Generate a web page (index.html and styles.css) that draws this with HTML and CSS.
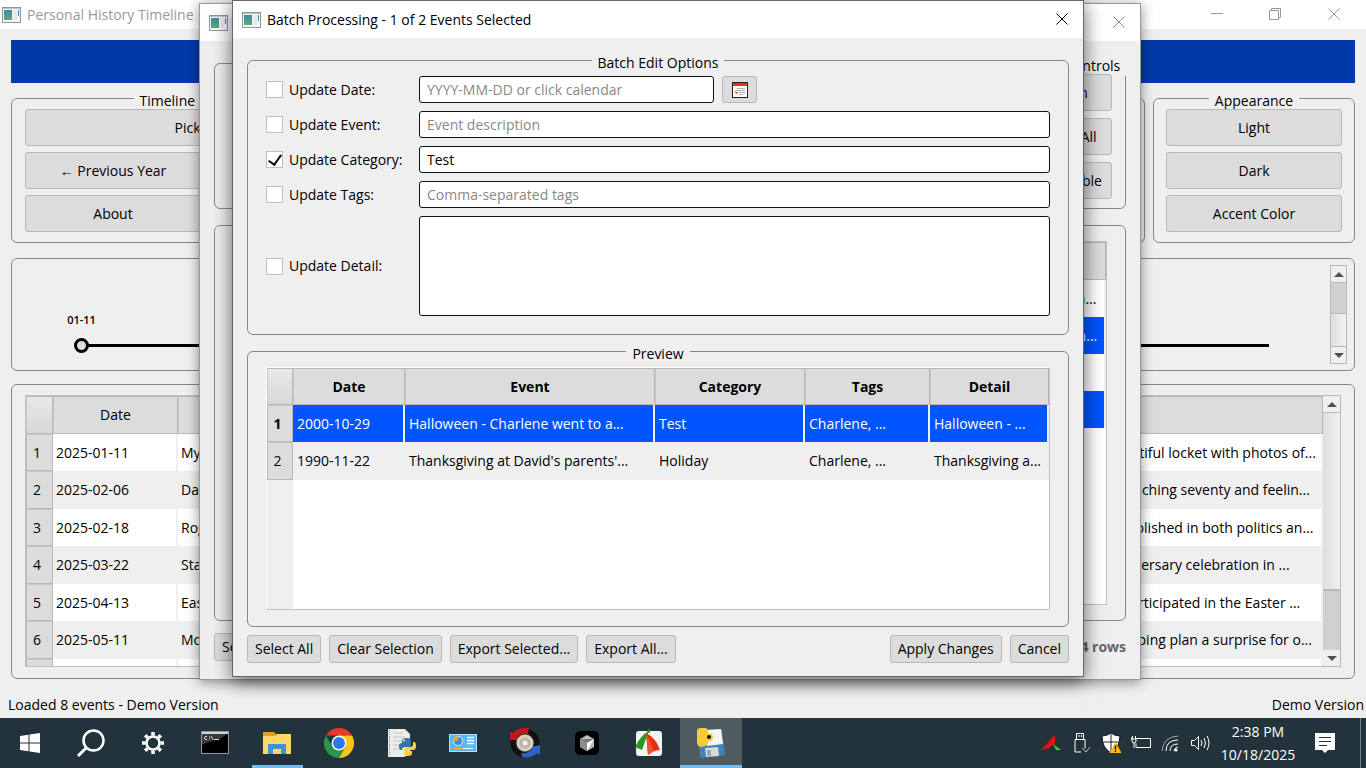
FILE: index.html
```html
<!DOCTYPE html>
<html lang="en">
<head>
    <meta charset="UTF-8">
    <meta name="viewport" content="width=device-width, initial-scale=1.0">
    <title>Personal History Timeline</title>
    <link rel="stylesheet" href="styles.css">
</head>
<body>
    <svg class="defs" aria-hidden="true">
        <defs>
            <linearGradient id="appFill" x1="0" y1="0" x2="0" y2="1">
                <stop offset="0" stop-color="#3f86a8"/>
                <stop offset="1" stop-color="#5cab6c"/>
            </linearGradient>
            <symbol id="appIcon" viewBox="0 0 19 16">
                <rect x="0.5" y="0.5" width="18" height="15" fill="#f4f6f7" stroke="#8d979d"/>
                <path d="M1 1.5h17" stroke="#b9c3c9"/>
                <rect x="2" y="3" width="8" height="10" fill="url(#appFill)"/>
                <rect x="11" y="3" width="4" height="10" fill="#e6e8ea"/>
                <rect x="16" y="3" width="1" height="6" fill="#3f86a8"/>
            </symbol>
            <symbol id="closeIcon" viewBox="0 0 12 12">
                <path d="M0.5 0.5l11 11M11.5 0.5l-11 11" stroke="currentColor" fill="none"/>
            </symbol>
        </defs>
    </svg>

    <div class="desktop">
        <!-- Main window -->
        <main class="window main-window">
            <header class="titlebar">
                <svg class="app-icon"><use href="#appIcon"/></svg>
                <span class="title">Personal History Timeline</span>
                <div class="caption">
                    <button aria-label="Minimize"><svg viewBox="0 0 12 12"><path d="M0 5.5h12" stroke="currentColor"/></svg></button>
                    <button aria-label="Restore"><svg viewBox="0 0 12 12"><path d="M0.5 2.5h9v9h-9zM2.5 2.5v-2h9v9h-2" stroke="currentColor" fill="none"/></svg></button>
                    <button aria-label="Close"><svg><use href="#closeIcon"/></svg></button>
                </div>
            </header>
            <div class="main-body">
                <div class="banner"></div>
                <div class="control-row">
                    <fieldset class="group nav-group">
                        <legend>Timeline Navigation</legend>
                        <button class="btn wide">Pick Year</button>
                        <button class="btn">← Previous Year</button>
                        <button class="btn">Next Year →</button>
                        <button class="btn">About</button>
                        <button class="btn">Help</button>
                    </fieldset>
                    <div class="group actions-group"></div>
                    <fieldset class="group look-group">
                        <legend>Appearance</legend>
                        <button class="btn">Light</button>
                        <button class="btn">Dark</button>
                        <button class="btn">Accent Color</button>
                    </fieldset>
                </div>
                <div class="group timeline">
                    <div class="track">
                        <div class="node"><span>01-11</span></div>
                    </div>
                    <div class="scrollbar">
                        <button class="up" aria-label="Scroll up"></button>
                        <div class="thumb timeline-thumb"></div>
                        <div class="trough"></div>
                        <button class="down" aria-label="Scroll down"></button>
                    </div>
                </div>
                <div class="group events">
                    <div class="table-box events-box">
                        <table>
                            <colgroup><col class="c-num"><col class="c-date"><col><col class="c-detail"></colgroup>
                            <thead><tr><th></th><th>Date</th><th>Event</th><th></th></tr></thead>
                            <tbody>
                                <tr><th>1</th><td>2025-01-11</td><td>My birthday</td><td>A beautiful locket with photos of...</td></tr>
                                <tr><th>2</th><td>2025-02-06</td><td>Dad's birthday</td><td>Approaching seventy and feelin...</td></tr>
                                <tr><th>3</th><td>2025-02-18</td><td>Roger's birthday</td><td>Is established in both politics an...</td></tr>
                                <tr><th>4</th><td>2025-03-22</td><td>Start of spring</td><td>– Anniversary celebration in ...</td></tr>
                                <tr><th>5</th><td>2025-04-13</td><td>Easter</td><td>She participated in the Easter ...</td></tr>
                                <tr><th>6</th><td>2025-05-11</td><td>Mother's Day</td><td>I'm helping plan a surprise for o...</td></tr>
                                <tr><th></th><td></td><td></td><td></td></tr>
                            </tbody>
                        </table>
                    </div>
                    <div class="scrollbar events-scroll">
                        <button class="up" aria-label="Scroll up"></button>
                        <div class="trough"></div>
                        <div class="thumb events-thumb"></div>
                        <button class="down" aria-label="Scroll down"></button>
                    </div>
                </div>
            </div>
            <footer class="statusbar">
                <span>Loaded 8 events - Demo Version</span>
                <span>Demo Version</span>
            </footer>
        </main>

        <!-- Search window -->
        <section class="window search-window">
            <header class="titlebar">
                <svg class="app-icon"><use href="#appIcon"/></svg>
                <div class="caption">
                    <button aria-label="Close"><svg><use href="#closeIcon"/></svg></button>
                </div>
            </header>
            <div class="search-body">
                <div class="search-top">
                    <div class="group search-left"></div>
                    <fieldset class="group view-group">
                        <legend>Table Controls</legend>
                        <button class="btn">Open</button>
                        <button class="btn">Clear All</button>
                        <button class="btn">Use Table</button>
                    </fieldset>
                </div>
                <div class="group results">
                    <div class="table-box">
                        <table>
                            <colgroup><col><col class="c-more"></colgroup>
                            <thead><tr><th></th><th></th></tr></thead>
                            <tbody>
                                <tr><td></td><td>Easter lunch...</td></tr>
                                <tr class="selected"><td></td><td>A Halloween...</td></tr>
                                <tr><td></td><td></td></tr>
                                <tr class="selected"><td></td><td></td></tr>
                            </tbody>
                        </table>
                    </div>
                </div>
                <div class="button-row">
                    <button class="btn small">Select All</button>
                    <span class="count">4 rows</span>
                </div>
            </div>
        </section>

        <!-- Batch dialog -->
        <section class="window batch-window" role="dialog" aria-label="Batch Processing">
            <header class="titlebar">
                <svg class="app-icon"><use href="#appIcon"/></svg>
                <span class="title">Batch Processing - 1 of 2 Events Selected</span>
                <div class="caption">
                    <button aria-label="Close"><svg><use href="#closeIcon"/></svg></button>
                </div>
            </header>
            <form class="batch-body">
                <fieldset class="group edit-group">
                    <legend>Batch Edit Options</legend>
                    <label class="check"><input type="checkbox"> Update Date:</label>
                    <div class="date-row">
                        <input class="field" type="text" placeholder="YYYY-MM-DD or click calendar" aria-label="Date">
                        <button class="btn small cal" type="button" aria-label="Open calendar">
                            <svg viewBox="0 0 16 16">
                                <rect x="0.5" y="0.5" width="15" height="15" fill="#fff" stroke="#222"/>
                                <path d="M1 1h14v3H1z" fill="#e63312"/>
                                <path d="M5 6.500h8M3 8.500h10M7 10.500h6M7 12.500h4" stroke="#b4b4b4"/>
                                <path d="M3 10h3v1H5v1H4v-1H3z" fill="#e8553c"/>
                            </svg>
                        </button>
                    </div>
                    <label class="check"><input type="checkbox"> Update Event:</label>
                    <input class="field" type="text" placeholder="Event description" aria-label="Event">
                    <label class="check"><input type="checkbox" checked> Update Category:</label>
                    <input class="field" type="text" value="Test" aria-label="Category">
                    <label class="check"><input type="checkbox"> Update Tags:</label>
                    <input class="field" type="text" placeholder="Comma-separated tags" aria-label="Tags">
                    <label class="check"><input type="checkbox"> Update Detail:</label>
                    <textarea class="field" aria-label="Detail"></textarea>
                </fieldset>
                <fieldset class="group preview-group">
                    <legend>Preview</legend>
                    <div class="table-box preview-box">
                        <table>
                            <colgroup><col class="p-num"><col class="p-date"><col class="p-event"><col class="p-cat"><col class="p-tags"><col></colgroup>
                            <thead><tr><th></th><th>Date</th><th>Event</th><th>Category</th><th>Tags</th><th>Detail</th></tr></thead>
                            <tbody>
                                <tr class="selected"><th>1</th><td>2000-10-29</td><td>Halloween - Charlene went to a...</td><td>Test</td><td>Charlene, ...</td><td>Halloween - ...</td></tr>
                                <tr><th>2</th><td>1990-11-22</td><td>Thanksgiving at David's parents'...</td><td>Holiday</td><td>Charlene, ...</td><td>Thanksgiving a...</td></tr>
                            </tbody>
                        </table>
                    </div>
                </fieldset>
                <div class="button-row">
                    <button class="btn small" type="button">Select All</button>
                    <button class="btn small" type="button">Clear Selection</button>
                    <button class="btn small" type="button">Export Selected...</button>
                    <button class="btn small" type="button">Export All...</button>
                    <button class="btn small push" type="button">Apply Changes</button>
                    <button class="btn small" type="button">Cancel</button>
                </div>
            </form>
        </section>
    </div>

    <nav class="taskbar">
        <button class="task start" aria-label="Start">
            <svg width="20" height="20" viewBox="0 0 20 20"><path d="M0 3l8.500-1.300v7.800H0zM9.500 1.500L20 0v9.500H9.500zM0 10.500h8.500v7.800L0 17zM9.500 10.500H20V20L9.500 18.500z" fill="#fff"/></svg>
        </button>
        <button class="task" aria-label="Search">
            <svg width="30" height="30" viewBox="0 0 30 30"><circle cx="17.500" cy="12.500" r="10" fill="none" stroke="#fff" stroke-width="2.500"/><path d="M10.500 19.500L2 28" stroke="#fff" stroke-width="3"/></svg>
        </button>
        <button class="task" aria-label="Settings">
            <svg width="24" height="24" viewBox="-12 -12 24 24"><circle r="6.500" fill="none" stroke="#fff" stroke-width="2.500"/><path d="M0-7.500V-11M0 7.500V11M-7.500 0H-11M7.500 0H11M5.300-5.300l2.500-2.500M-5.300-5.300l-2.500-2.500M5.300 5.300l2.500 2.500M-5.300 5.300l-2.500 2.500" stroke="#fff" stroke-width="3.500"/></svg>
        </button>
        <button class="task" aria-label="Command Prompt">
            <svg width="28" height="24" viewBox="0 0 28 24"><rect x="0.500" y="0.500" width="27" height="22" fill="#000" stroke="#8f979a"/><path d="M1 1h26v2H1z" fill="#cdd3d6"/><path d="M1 3h24C20 10 9 9 1 14z" fill="#3a3a3a"/><path d="M4 5.500h2M4 8.500h2M3.500 6v2M8 6h1M8 8h1M10 5l2 3.500M13 8.500h5" stroke="#ddd" fill="none"/></svg>
        </button>
        <button class="task running" aria-label="File Explorer">
            <svg width="28" height="24" viewBox="0 0 28 24"><path d="M0 1h11l2 2v3H0z" fill="#e0a11b"/><path d="M0 5h12l2-2h14v20H0z" fill="#ffd766"/><path d="M5 23V13h18v10h-5v-5h-8v5z" fill="#3c93dc"/></svg>
        </button>
        <button class="task" aria-label="Chrome">
            <svg width="30" height="30" viewBox="-15 -15 30 30"><path d="M-13-7.500A15 15 0 0 1 13-7.500H0z" fill="#e23b2e"/><path d="M-13-7.500A15 15 0 0 0 0 15L6.500 3.750-6.500 3.750z" fill="#279847"/><path d="M13-7.500A15 15 0 0 1 0 15L6.500 3.750 0-7.500z" fill="#fcc419"/><circle r="7.500" fill="#fff"/><circle r="6" fill="#2a78ec"/></svg>
        </button>
        <button class="task" aria-label="Python editor">
            <svg width="30" height="30" viewBox="0 0 30 30"><path d="M2 1h17l5 5v20l-6 3H2z" fill="#ececea"/><path d="M3.500 2v26" stroke="#8b8b8b" stroke-dasharray="1 1"/><path d="M7 5h9M7 9h12M7 13h10M7 17h8M7 21h7" stroke="#c4c4c4"/><path d="M16 15v-2q0-3 4.500-3t4.500 3v4q0 2-2 2h-4q-3 0-3 3h-1q-2 0-2-4 0-3 3-3h6" fill="#3572a5"/><path d="M27 14h1q2 0 2 4 0 4-3 4h-5v1h4v2q0 3-4.500 3T18 25v-3q0-3 3-3h3q3 0 3-3z" fill="#ffd245"/><circle cx="18" cy="12.500" r="1" fill="#fff"/></svg>
        </button>
        <button class="task" aria-label="Control Panel">
            <svg width="28" height="20" viewBox="0 0 28 20"><rect x="0.500" y="1.500" width="27" height="17" fill="#56b9f2" stroke="#b5e1fa"/><circle cx="9" cy="8" r="5" fill="#d8f0fd"/><path d="M9 8V4a4 4 0 1 1-4 4z" fill="#3a8fd0"/><path d="M9 8H4a5 5 0 0 1 5-5z" fill="#f7a727"/><path d="M18 4.500h7M18 7.500h7M18 10.500h7" stroke="#fff" stroke-width="1.500"/><path d="M4 15.500h10" stroke="#f7a727" stroke-width="2"/><path d="M14 15.500h10" stroke="#fff"/></svg>
        </button>
        <button class="task" aria-label="Tire sync">
            <svg width="30" height="30" viewBox="-15 -15 30 30"><circle r="12" fill="none" stroke="#111" stroke-width="5"/><path d="M-15-11l3 1Q-7-16 4-15L3-9Q-4-10-7-6l2 3h-10z" fill="#c4161c"/><path d="M15 2v10l-3-2Q6 16-3 14l-1-4Q3 11 7 6L5 4z" fill="#2c62c9"/><circle r="8.500" fill="#d8cfc0"/><circle r="5.500" fill="#bdb3a4"/><circle r="2.500" fill="#eee"/></svg>
        </button>
        <button class="task" aria-label="Cursor">
            <svg width="24" height="24" viewBox="0 0 24 24"><rect width="24" height="24" rx="5" fill="#000"/><path d="M12 4l7 4v8l-7 4-7-4V8z" fill="#bdbdbd"/><path d="M5 8h14l-7 4z" fill="#777"/><path d="M19 8l-7 12v-8z" fill="#fff"/><path d="M5 8l7 4v8l-7-4z" fill="#8d8d8d"/></svg>
        </button>
        <button class="task" aria-label="Screen capture">
            <svg width="30" height="30" viewBox="0 0 30 30"><rect x="2" y="3" width="26" height="25" rx="3" fill="#f3f3f3"/><path d="M15 3Q7 7 1 19l7 3Q11 12 15 3z" fill="#249a25"/><path d="M13 4l3-4v5z" fill="#249a25"/><path d="M12 5Q13 15 14 27q6-5 12-5Q22 10 12 5z" fill="#e4300f"/><path d="M12 5q4 9 8 18l-6 4Q13 15 12 5z" fill="#f3502c"/></svg>
        </button>
        <button class="task running active" aria-label="Timeline app">
            <svg width="30" height="30" viewBox="0 0 30 30"><path d="M2 4l24-3 3 26-25 3z" fill="#3f83b8"/><path d="M9 2l16-1 2 15-16 2z" fill="#f5f5f5"/><path d="M9 20l13-1 1 9-13 1z" fill="#dadada"/><path d="M11 22h4v6h-4z" fill="#9aa"/><path d="M1 3q0-3 4-3h4q3 0 3 3v3q5-2 5 3 0 5-5 4v3q-3 3-8 3-3-1-3-6z" fill="#f9ca3c"/><circle cx="13" cy="9" r="2" fill="#111"/></svg>
        </button>

        <div class="tray">
            <svg viewBox="0 0 20 20"><path d="M0 17L14 2v8l-6 5z" fill="#f40f0f"/><path d="M12 11l8 6h-5z" fill="#13e02d"/></svg>
            <svg viewBox="0 0 20 20"><path d="M5.500 6V0.500h7V6M4 6.500h10v9M4 6.500v12.500h6" fill="none" stroke="#fff"/><path d="M8 2v2M10.500 2v2" stroke="#fff"/><path d="M11 15l4 4 4-5" fill="none" stroke="#bbb"/></svg>
            <svg viewBox="0 0 20 20"><path d="M10 0q4 3 9 3-.5 12-9 17Q1 15 1 3q5 0 9-3z" fill="#fff" stroke="#111"/><path d="M10 1v18M1 9h17" stroke="#222"/><path d="M14.500 9l6 11h-12z" fill="#fdbb16"/><path d="M14.500 12.500v4M14.500 17.500v1.500" stroke="#222" stroke-width="1.500"/></svg>
            <svg viewBox="0 0 20 20"><path d="M5 5.500h14.500v9H5v-4M1 4v4q0 2 2 2t2-2V6H0M3 10v5M1.500 3v3M4.500 3v3" fill="none" stroke="#fff"/></svg>
            <svg viewBox="0 0 20 20"><path d="M1 18Q2 4 17 3" fill="none" stroke="#9ba4a8"/><path d="M5 18Q5 7 17 7M9 18q0-7 8-7M13 18q0-3 4-4" fill="none" stroke="#fff"/><circle cx="15" cy="17" r="1.500" fill="#fff"/></svg>
            <svg viewBox="0 0 20 20"><path d="M0.500 7.500h3l4-4v13l-4-4h-3z" fill="none" stroke="#fff"/><path d="M10 7q2 3 0 6M13 5q3 5 0 10M16 3q4 7 0 14" fill="none" stroke="#fff"/></svg>
        </div>
        <div class="clock"><span>2:38 PM</span><span>10/18/2025</span></div>
        <button class="notify" aria-label="Notifications">
            <svg width="20" height="20" viewBox="0 0 20 20"><path d="M0 0h20v17h-7l-3 3-3-3H0z" fill="#fff"/><path d="M4 4.500h12M4 8.500h12M4 12.500h8" stroke="#22333b"/></svg>
        </button>
        <div class="peek"></div>
    </nav>
</body>
</html>
```

FILE: styles.css
```css
* {
    margin: 0;
    padding: 0;
    box-sizing: border-box;
}

body {
    font-family: 'Open Sans', 'Noto Sans', sans-serif;
    font-size: 14px;
    line-height: 20px;
    color: #000;
    background: #efefef;
    height: 100vh;
    display: flex;
    flex-direction: column;
    overflow: hidden;
}

button, input, textarea {
    font: inherit;
    color: inherit;
}

.defs {
    position: absolute;
    width: 0;
    height: 0;
}

.desktop {
    position: relative;
    flex: 1;
    min-height: 0;
}

/* Windows */
.window {
    position: absolute;
    display: flex;
    flex-direction: column;
    background: #efefef;
}

.main-window {
    inset: 0;
}

.search-window {
    top: 3px;
    bottom: 38px;
    left: 199px;
    right: 225px;
    border: 1px solid #999;
    box-shadow: 0 2px 12px rgba(0, 0, 0, 0.45);
}

.batch-window {
    top: 0;
    bottom: 41px;
    left: 232px;
    right: 282px;
    border: 1px solid #666;
    box-shadow: 0 4px 18px rgba(0, 0, 0, 0.6);
}

.titlebar {
    display: flex;
    align-items: center;
    height: 37px;
    padding-left: 9px;
    background: #fff;
    flex: none;
}

.main-window .titlebar {
    height: 29px;
    padding: 0 2px;
    color: #999;
}

.search-window .titlebar {
    color: #888;
}

.app-icon {
    width: 19px;
    height: 16px;
    margin-right: 6px;
}

.caption {
    display: flex;
    margin-left: auto;
    height: 100%;
}

.caption button {
    width: 42px;
    border: none;
    background: none;
}

.main-window .caption button {
    width: 58px;
}

.main-window .caption button:last-child {
    width: 60px;
}

.caption svg {
    width: 12px;
    height: 12px;
}

/* Group boxes */
.group {
    border: 1px solid #888;
    border-radius: 6px;
    min-width: 0;
}

.group legend {
    margin: 0 auto;
    padding: 6px 6px 0;
}

.btn {
    height: 37px;
    padding: 0 7px;
    background: #dcdcdc;
    border: 1px solid #b8b8b8;
    border-radius: 3px;
    white-space: nowrap;
}

.btn.small {
    height: 28px;
}

/* Main window */
.main-body {
    flex: 1;
    min-height: 0;
    display: flex;
    flex-direction: column;
    padding: 11px 11px 0;
}

.banner {
    height: 43px;
    background: #0039aa;
    flex: none;
}

.control-row {
    display: flex;
    gap: 8px;
    margin-top: 2px;
    height: 158px;
    flex: none;
}

.nav-group, .look-group {
    display: grid;
    gap: 6px;
    padding: 0 12px 10px;
    align-content: start;
}

.nav-group legend, .look-group legend {
    margin-bottom: -2px;
}

.nav-group {
    flex: 0 0 385px;
    grid-template-columns: 1fr 1fr;
    padding-left: 13px;
}

.nav-group .wide {
    grid-column: 1 / 3;
}

.actions-group {
    flex: 1;
    margin-top: 13px;
}

.look-group {
    flex: 0 0 202px;
}

.timeline {
    display: flex;
    margin-top: 15px;
    height: 113px;
    padding: 6px 7px;
    flex: none;
}

.track {
    position: relative;
    flex: 1;
    height: 3px;
    margin: 79px 61px 0 62px;
    background: #000;
}

.node {
    position: absolute;
    left: -7px;
    top: -6px;
    width: 15px;
    height: 15px;
    border: 3px solid #000;
    border-radius: 50%;
    background: #dcdcdc;
}

.node span {
    position: absolute;
    left: 50%;
    bottom: 20px;
    transform: translateX(-50%);
    font-size: 11px;
    font-weight: 600;
    white-space: nowrap;
}

.events {
    display: flex;
    flex: 1;
    min-height: 0;
    margin-top: 13px;
    padding: 10px 13px 11px;
}

.statusbar {
    display: flex;
    justify-content: space-between;
    align-items: center;
    height: 39px;
    padding: 12px 2px 0 8px;
    flex: none;
}

/* Scrollbars */
.scrollbar {
    display: flex;
    flex-direction: column;
    width: 17px;
    border: 1px solid #b8b8b8;
    background: linear-gradient(90deg, #dedede, #f2f2f2);
}

.scrollbar button {
    height: 16px;
    flex: none;
    border: none;
    background: #efefef;
    display: flex;
    align-items: center;
    justify-content: center;
}

.up::before, .down::before {
    content: "";
    border: 5px solid transparent;
}

.up::before {
    border-top: none;
    border-bottom-color: #505050;
}

.down::before {
    border-bottom: none;
    border-top-color: #505050;
}

.trough {
    flex: 1;
    border: solid #b8b8b8;
    border-width: 1px 0;
}

.thumb {
    background: #d0d0d0;
    border-top: 1px solid #b8b8b8;
}

.timeline-thumb {
    height: 31px;
}

.events-thumb {
    height: 60px;
}

.events-scroll {
    width: 18px;
    border-left: none;
}

/* Tables */
.table-box {
    flex: 1;
    min-width: 0;
    overflow: hidden;
    background: #fff;
    border: 1px solid #c0c0c0;
}

table {
    width: 100%;
    table-layout: fixed;
    border-collapse: separate;
    border-spacing: 0;
}

thead th {
    height: 38px;
    font-weight: 400;
    background: #dcdcdc;
    border: 1px solid #b8b8b8;
    border-left-color: #c8c8c8;
}

thead th:first-child {
    background: linear-gradient(#e8e8e8, #d8d8d8);
}

tbody th {
    height: 37px;
    padding-right: 5px;
    font-weight: 400;
    background: #dcdcdc;
    border: 1px solid #b8b8b8;
    border-top-color: #c8c8c8;
}

tbody td {
    height: 37px;
    padding-left: 3px;
    border-right: 2px solid #efefef;
    overflow: hidden;
    white-space: nowrap;
}

.events-box {
    border-right: none;
}

.events tbody tr {
    height: 38px;
}

.events tbody tr:nth-child(odd) {
    height: 37px;
}

.events tbody tr:nth-child(even), .preview-box tbody tr:nth-child(even) {
    background: #efefef;
}

tbody tr.selected {
    background: #0055ff;
    color: #fff;
}

.c-num { width: 27px; }
.c-date { width: 125px; }
.c-detail { width: 232px; }
.c-more { width: 104px; }
.p-num { width: 26px; }
.p-date { width: 112px; }
.p-event { width: 250px; }
.p-cat { width: 150px; }
.p-tags { width: 125px; }

/* Search window */
.search-body {
    flex: 1;
    min-height: 0;
    display: flex;
    flex-direction: column;
    padding: 9px 14px 18px;
}

.search-top {
    display: flex;
    gap: 8px;
    height: 159px;
    flex: none;
}

.search-left {
    flex: 1;
    margin-top: 13px;
}

.view-group {
    display: grid;
    gap: 7px;
    align-content: start;
    flex: 0 0 112px;
    padding: 0 13px;
}

.view-group legend {
    margin: 0 -8px -2px;
    white-space: nowrap;
}

.results {
    flex: 1;
    min-height: 0;
    display: flex;
    margin-top: 16px;
    padding: 15px 18px;
}

.search-body .button-row {
    margin-top: 12px;
}

.count {
    margin-left: auto;
    font-weight: 700;
    color: #666;
}

/* Batch dialog */
.batch-body {
    flex: 1;
    min-height: 0;
    display: flex;
    flex-direction: column;
    padding: 9px 14px 13px;
}

.edit-group {
    display: grid;
    grid-template-columns: 145px 1fr;
    gap: 8px;
    align-items: center;
    padding: 3px 18px 18px;
}

.check {
    display: flex;
    align-items: center;
    gap: 6px;
    white-space: nowrap;
}

.check input {
    appearance: none;
    width: 17px;
    height: 17px;
    background: #fff;
    border: 1px solid #c0c0c0;
}

.check input:checked::before {
    content: "";
    display: block;
    width: 6px;
    height: 11px;
    margin: 0 auto;
    border: solid #000;
    border-width: 0 2px 2px 0;
    transform: rotate(35deg);
}

.date-row {
    display: flex;
    gap: 8px;
}

.date-row .field {
    width: 295px;
}

.cal {
    width: 35px;
    display: flex;
    align-items: center;
    justify-content: center;
}

.btn.cal {
    height: 27px;
}

.cal svg {
    width: 16px;
    height: 16px;
    flex: none;
}

.field {
    width: 100%;
    height: 27px;
    padding: 0 7px;
    background: #fff;
    border: 1px solid #111;
    border-radius: 3px;
    outline: none;
}

.field::placeholder {
    color: #888;
}

textarea.field {
    height: 100px;
    resize: none;
    display: block;
}

.preview-group {
    flex: 1;
    min-height: 0;
    display: flex;
    margin-top: 3px;
    padding: 3px 18px 16px;
}

.preview-box {
    border-left-color: #fff;
    border-top-color: #fff;
    background: linear-gradient(90deg, #efefef 26px, #fff 26px);
}

.preview-box thead th {
    height: 37px;
    padding-top: 1px;
    font-weight: 700;
}

.preview-box tbody td {
    padding-left: 4px;
}

.preview-box tbody tr:nth-child(even) {
    height: 38px;
}

.preview-box .selected th {
    font-weight: 700;
    color: #000;
}

.button-row {
    display: flex;
    gap: 8px;
    margin-top: 8px;
    align-items: center;
    flex: none;
}

.push {
    margin-left: auto;
}

/* Taskbar */
.taskbar {
    display: flex;
    height: 50px;
    background: #22333b;
    color: #fff;
    flex: none;
}

.taskbar button {
    border: none;
    background: none;
    display: flex;
    align-items: center;
    justify-content: center;
}

.task {
    width: 62px;
}

.task.start {
    width: 60px;
}

.taskbar .running {
    background: linear-gradient(#76b9ed, #76b9ed) center bottom / 51px 3px no-repeat;
}

.taskbar .active {
    background: #4e5c62;
    box-shadow: inset 0 -3px #76b9ed;
}

.tray {
    display: flex;
    align-items: center;
    gap: 10px;
    margin-left: auto;
}

.tray svg {
    width: 20px;
    height: 20px;
}

.clock {
    width: 94px;
    display: flex;
    flex-direction: column;
    justify-content: center;
    align-items: center;
    line-height: 23px;
}

.notify {
    width: 40px;
}

.peek {
    width: 6px;
    margin-left: 15px;
    border-left: 1px solid #77838a;
}
```
